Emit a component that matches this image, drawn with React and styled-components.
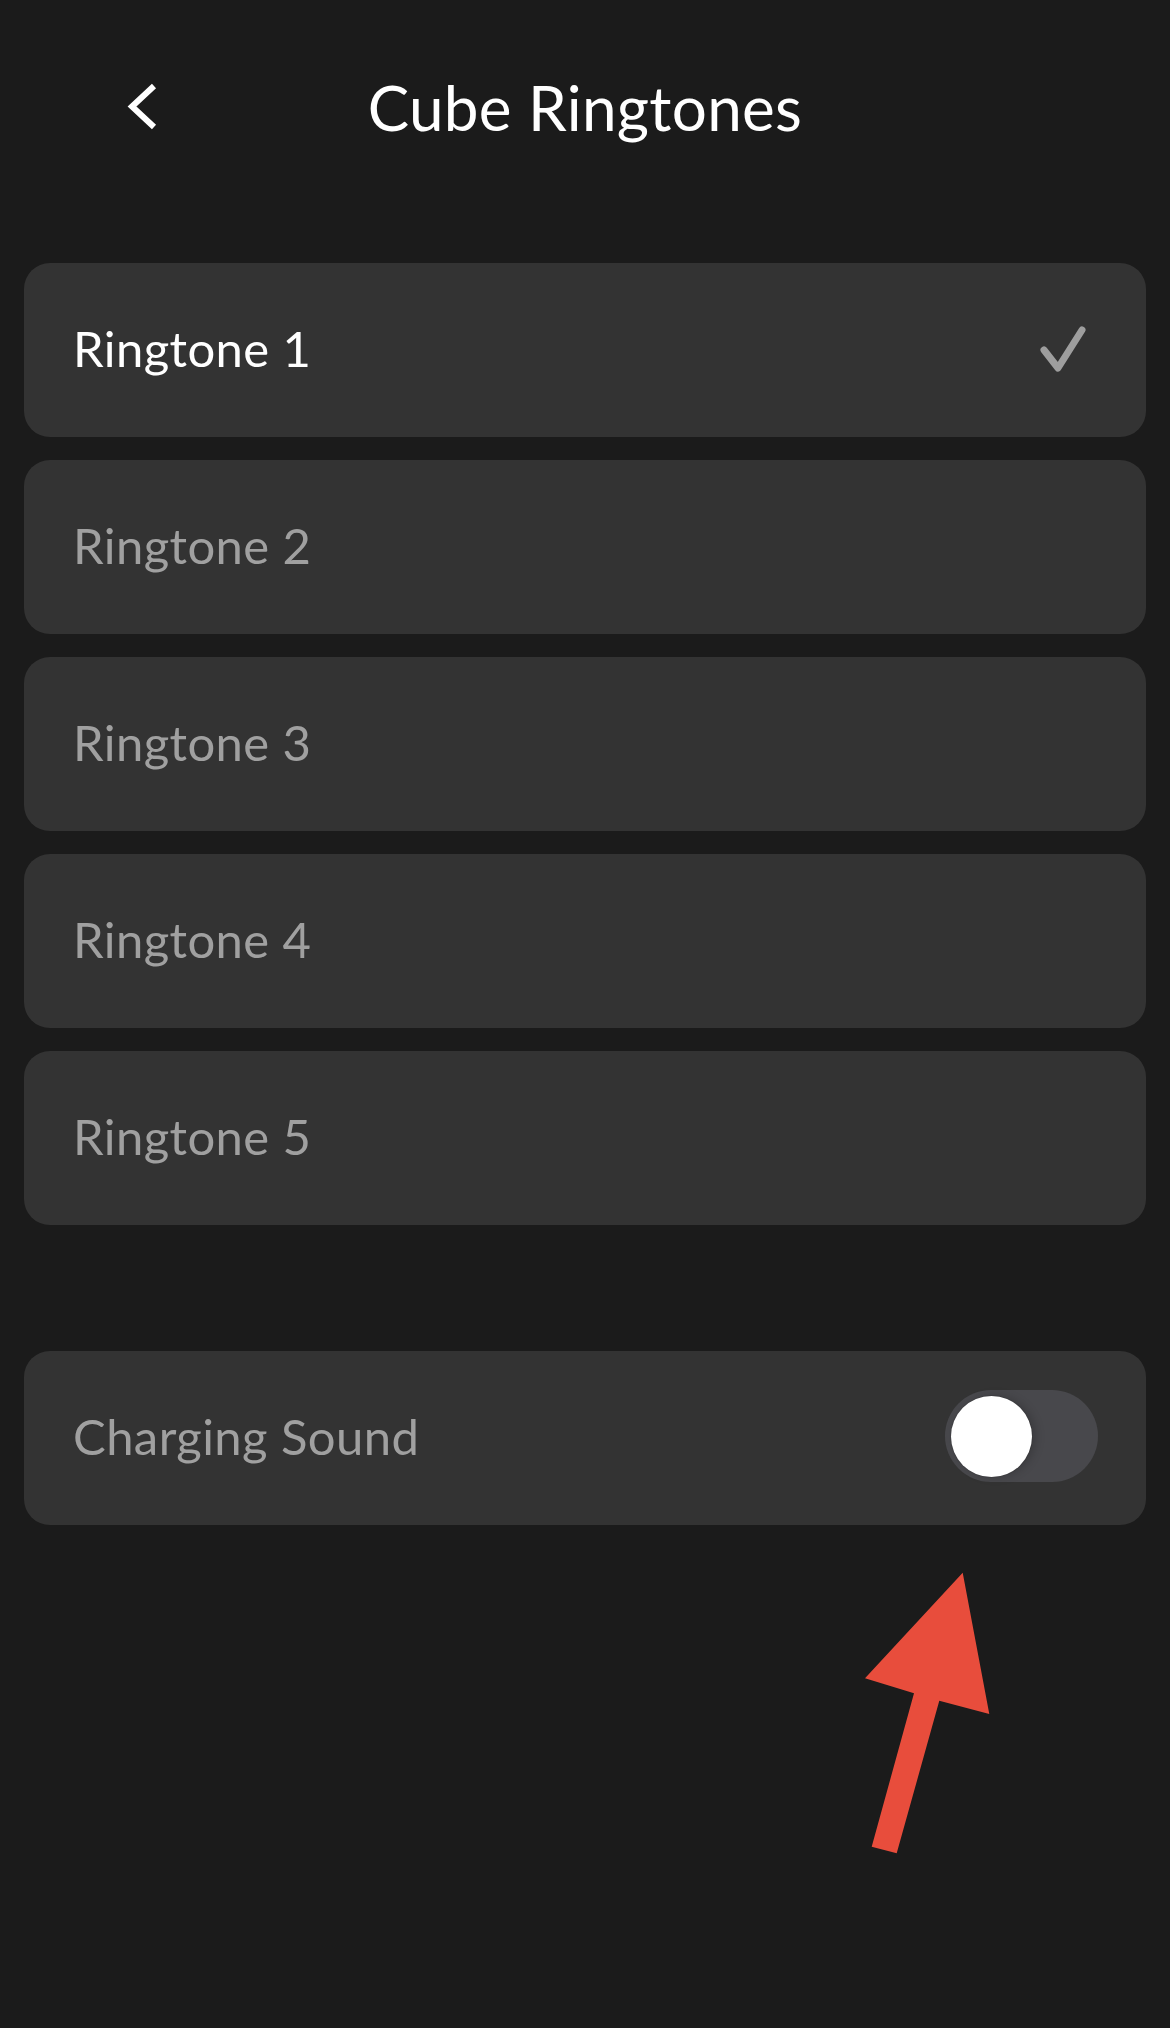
import React, { useState } from "react";
import styled, { createGlobalStyle } from "styled-components";

const GlobalStyle = createGlobalStyle`
  body {
    margin: 0;
    background-color: #1b1b1b;
    font-family: "Lato", "Open Sans", sans-serif;
  }
`;

const Page = styled.div`
  position: relative;
  min-height: 2028px;
  padding: 0 24px;
  box-sizing: border-box;
  background-color: #1b1b1b;
`;

const Header = styled.header`
  height: 214px;
  display: grid;
  grid-template-columns: 1fr auto 1fr;
  align-items: center;
`;

const BackButton = styled.button`
  justify-self: start;
  margin-left: 100px;
  padding: 0;
  border: none;
  background: none;
  display: flex;
  cursor: pointer;
`;

const Titulo = styled.h1`
  margin: 0;
  font-size: 62px;
  font-weight: 400;
  letter-spacing: 0.3px;
  color: #ffffff;
`;

const Lista = styled.div`
  margin-top: 49px;
  display: flex;
  flex-direction: column;
  gap: 23px;
`;

const Card = styled.div`
  height: 174px;
  border-radius: 26px;
  background-color: #333333;
  display: flex;
  align-items: center;
  justify-content: space-between;
  padding: 0 ${(props) => props.$padRight || "58px"} 4px 49px;
  box-sizing: border-box;
  cursor: pointer;
`;

const Nome = styled.span`
  font-size: 49px;
  letter-spacing: 0.4px;
  color: ${(props) => (props.$ativo ? "#ffffff" : "#a0a0a0")};
`;

const Secao = styled.div`
  margin-top: 126px;
`;

const Track = styled.button`
  width: 153px;
  height: 92px;
  border-radius: 46px;
  border: none;
  padding: 6px;
  background-color: ${(props) => (props.$on ? "#34c759" : "#48484c")};
  display: flex;
  justify-content: ${(props) => (props.$on ? "flex-end" : "flex-start")};
  align-items: center;
  box-sizing: border-box;
  cursor: pointer;
`;

const Knob = styled.span`
  width: 81px;
  height: 81px;
  border-radius: 50%;
  background-color: #ffffff;
  box-shadow: 0 0 0 1px rgba(0, 0, 0, 0.08), 4px 0 10px rgba(0, 0, 0, 0.18);
`;

const Seta = styled.svg`
  position: absolute;
  left: 860px;
  top: 1565px;
`;

const ringtones = ["Ringtone 1", "Ringtone 2", "Ringtone 3", "Ringtone 4", "Ringtone 5"];

function Check() {
  return (
    <svg width="50" height="52" viewBox="0 0 50 52">
      <polyline
        points="6,28 20,46 44,8"
        fill="none"
        stroke="#9e9e9e"
        strokeWidth="7"
        strokeLinecap="round"
        strokeLinejoin="round"
      />
    </svg>
  );
}

export default function App() {
  const [selecionado, setSelecionado] = useState(0);
  const [carregando, setCarregando] = useState(false);

  return (
    <Page>
      <GlobalStyle />
      <Header>
        <BackButton aria-label="Voltar">
          <svg width="34" height="50" viewBox="0 0 34 50">
            <polyline points="30,4 8,24.5 30,45" fill="none" stroke="#ffffff" strokeWidth="6" />
          </svg>
        </BackButton>
        <Titulo>Cube Ringtones</Titulo>
        <div />
      </Header>

      <Lista>
        {ringtones.map((nome, i) => (
          <Card key={nome} onClick={() => setSelecionado(i)}>
            <Nome $ativo={selecionado === i}>{nome}</Nome>
            {selecionado === i && <Check />}
          </Card>
        ))}
      </Lista>

      <Secao>
        <Card $padRight="48px">
          <Nome>Charging Sound</Nome>
          <Track $on={carregando} onClick={() => setCarregando(!carregando)}>
            <Knob />
          </Track>
        </Card>
      </Secao>

      <Seta width="140" height="300" viewBox="860 1565 140 300">
        <polygon
          points="962.7,1572.7 989.3,1714 939.3,1700.7 896.7,1853.3 871.7,1846.7 914,1693.3 865,1678.3"
          fill="#e84d3c"
        />
      </Seta>
    </Page>
  );
}
